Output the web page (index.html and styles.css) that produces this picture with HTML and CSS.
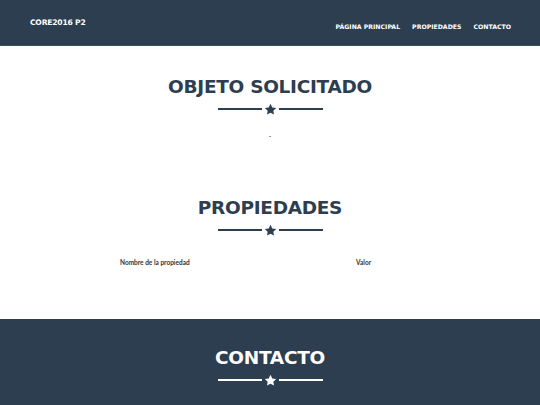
FILE: index.html
```html
<!DOCTYPE html>
<html lang="es">
<head>
<meta charset="utf-8">
<title>CORE2016 P2</title>
<link rel="stylesheet" href="styles.css">
</head>
<body>
<nav class="navbar">
  <a class="brand" href="#">CORE2016 P2</a>
  <ul class="nav-links">
    <li><a href="#">Página principal</a></li>
    <li><a href="#">Propiedades</a></li>
    <li><a href="#">Contacto</a></li>
  </ul>
</nav>

<section class="section objeto">
  <h2 class="title">Objeto solicitado</h2>
  <div class="divider">
    <span class="line"></span>
    <svg class="star" viewBox="0 0 24 24"><path d="M12 1.5l3.2 6.6 7.3 1-5.3 5.1 1.3 7.2L12 18l-6.5 3.4 1.3-7.2L1.5 9.1l7.3-1z"/></svg>
    <span class="line"></span>
  </div>
  <p class="value">-</p>
</section>

<section class="section propiedades">
  <h2 class="title">Propiedades</h2>
  <div class="divider">
    <span class="line"></span>
    <svg class="star" viewBox="0 0 24 24"><path d="M12 1.5l3.2 6.6 7.3 1-5.3 5.1 1.3 7.2L12 18l-6.5 3.4 1.3-7.2L1.5 9.1l7.3-1z"/></svg>
    <span class="line"></span>
  </div>
  <div class="table-head">
    <span>Nombre de la propiedad</span>
    <span>Valor</span>
  </div>
</section>

<section class="section contacto">
  <h2 class="title">Contacto</h2>
  <div class="divider">
    <span class="line"></span>
    <svg class="star" viewBox="0 0 24 24"><path d="M12 1.5l3.2 6.6 7.3 1-5.3 5.1 1.3 7.2L12 18l-6.5 3.4 1.3-7.2L1.5 9.1l7.3-1z"/></svg>
    <span class="line"></span>
  </div>
</section>
</body>
</html>
```

FILE: styles.css
```css
* { box-sizing: border-box; }
html, body {
  margin: 0;
  padding: 0;
  background: #ffffff;
  font-family: "Lato", "Liberation Sans", sans-serif;
  color: #2c3e50;
  overflow: hidden;
}
a { text-decoration: none; color: inherit; }

.navbar {
  height: 46px;
  background: #2c3e50;
  display: flex;
  align-items: center;
  justify-content: space-between;
  padding: 0 29px 0 30px;
  border-bottom: 1px solid #3a4d60;
}
.brand {
  color: #ffffff;
  font-family: "DejaVu Sans", sans-serif;
  font-weight: 700;
  font-size: 7.6px;
  letter-spacing: -0.2px;
}
.nav-links {
  list-style: none;
  display: flex;
  gap: 12px;
  margin: 0;
  padding: 0;
}
.nav-links a {
  color: #ffffff;
  font-family: "DejaVu Sans", sans-serif;
  font-weight: 700;
  font-size: 6.2px;
  text-transform: uppercase;
}

.section {
  display: flex;
  flex-direction: column;
  align-items: center;
}
.objeto { padding-top: 30px; height: 124px; }
.propiedades { padding-top: 27px; height: 149px; }
.contacto { padding-top: 28px; height: 86px; background: #2c3e50; color: #ffffff; }

.title {
  margin: 0;
  font-family: "DejaVu Sans", sans-serif;
  font-weight: 700;
  font-size: 18.5px;
  line-height: 22px;
  text-transform: uppercase;
  letter-spacing: -0.3px;
}

.divider {
  display: flex;
  align-items: center;
  gap: 2px;
  margin-top: 5px;
  height: 12px;
}
.line {
  display: block;
  width: 44px;
  height: 2px;
  background: #2c3e50;
}
.star { width: 13px; height: 13px; fill: #2c3e50; }
.contacto .line { background: #ffffff; }
.contacto .star { fill: #ffffff; }

.value {
  margin: 17px 0 0;
  font-size: 7px;
  color: #333;
}

.table-head {
  margin-top: 23px;
  width: 316px;
  padding: 0 8px;
  display: grid;
  grid-template-columns: 236px 1fr;
  font-size: 6.5px;
  font-weight: 700;
  color: #333;
}
```
